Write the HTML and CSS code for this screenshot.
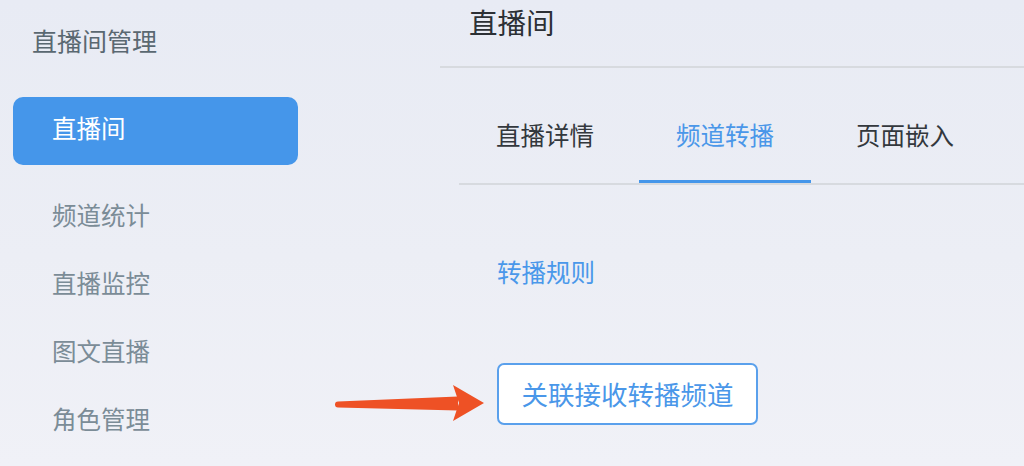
FILE: index.html
```html
<!DOCTYPE html>
<html lang="zh-CN">
<head>
<meta charset="utf-8">
<title>直播间</title>
<link rel="stylesheet" href="styles.css">
</head>
<body>
<div class="app">
  <aside class="sidebar">
    <div class="side-title">直播间管理</div>
    <nav class="side-nav">
      <a class="side-item active">直播间</a>
      <a class="side-item">频道统计</a>
      <a class="side-item">直播监控</a>
      <a class="side-item">图文直播</a>
      <a class="side-item">角色管理</a>
    </nav>
  </aside>
  <main class="main">
    <header class="main-header">直播间</header>
    <div class="tabs">
      <div class="tab">直播详情</div>
      <div class="tab active">频道转播</div>
      <div class="tab">页面嵌入</div>
    </div>
    <div class="content">
      <a class="rule-link">转播规则</a>
      <button class="link-btn">关联接收转播频道</button>
    </div>
  </main>
  <svg class="arrow" width="160" height="44" viewBox="330 382 160 44" aria-hidden="true">
    <path d="M338,401.6 L458,396.5 L458,410.5 L338,407.6 A3,3 0 0 1 338,401.6 Z" fill="#ee5125"/>
    <path d="M453,385 L484,403 L453,421 L459,403 Z" fill="#ee5125"/>
  </svg>
</div>
</body>
</html>
```

FILE: styles.css
```css
* {
  box-sizing: border-box;
}

html, body {
  margin: 0;
  padding: 0;
}

body {
  width: 1024px;
  height: 466px;
  overflow: hidden;
  font-family: "Noto Sans CJK SC", "Noto Sans", sans-serif;
  background: linear-gradient(180deg, #e8ebf4 0%, #eceef5 55%, #f0f1f7 100%);
}

.app {
  position: relative;
  display: flex;
  height: 466px;
}

.sidebar {
  width: 440px;
  flex: none;
}

.side-title {
  padding-left: 32px;
  line-height: 80px;
  font-size: 25px;
  color: #5a6871;
}

.side-nav {
  display: flex;
  flex-direction: column;
  margin-top: 17px;
}

.side-item {
  display: block;
  height: 68px;
  line-height: 68px;
  padding-left: 52px;
  font-size: 24.5px;
  color: #7b8c97;
}

.side-item.active {
  width: 285px;
  margin-left: 13px;
  padding-left: 39px;
  height: 68px;
  line-height: 62px;
  padding-bottom: 6px;
  margin-bottom: 16px;
  border-radius: 10px;
  background: #4596ea;
  color: #ffffff;
}

.main {
  flex: 1;
  display: flex;
  flex-direction: column;
}

.main-header {
  height: 68px;
  padding-left: 29px;
  line-height: 44px;
  font-size: 28.5px;
  color: #2c3035;
  border-bottom: 2px solid #d7dadf;
}

.tabs {
  display: flex;
  gap: 8px;
  margin-left: 19px;
  border-bottom: 2px solid #d7dadf;
}

.tab {
  width: 172px;
  padding: 47px 0 25px;
  text-align: center;
  line-height: 40px;
  font-size: 24.5px;
  color: #33383d;
  border-bottom: 3px solid transparent;
}

.tab.active {
  color: #4a97e9;
  border-bottom-color: #4596ea;
}

.content {
  display: flex;
  flex-direction: column;
  align-items: flex-start;
  padding-left: 57px;
}

.rule-link {
  margin-top: 67px;
  line-height: 40px;
  font-size: 24.5px;
  color: #4a98ea;
}

.link-btn {
  margin-top: 71px;
  width: 261px;
  height: 62px;
  padding: 0;
  border: 2px solid #5aa0ec;
  border-radius: 7px;
  background: #ffffff;
  font-family: inherit;
  font-size: 26.5px;
  line-height: 58px;
  color: #4a97e9;
}

.arrow {
  position: absolute;
  left: 330px;
  top: 382px;
}
```
